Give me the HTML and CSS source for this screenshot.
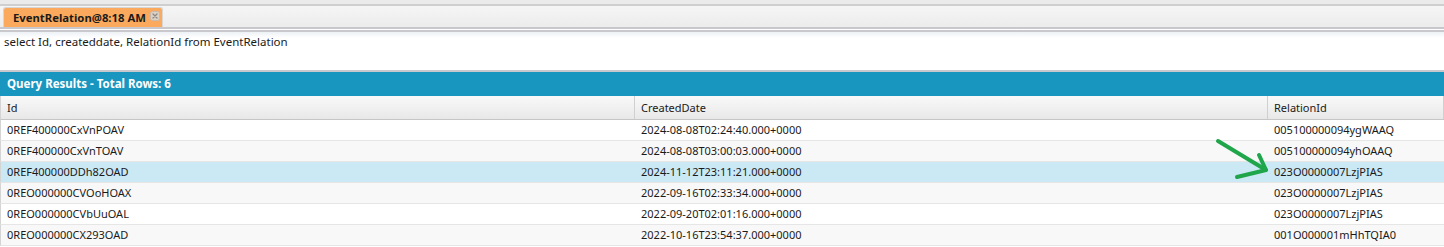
FILE: index.html
```html
<!DOCTYPE html>
<html lang="en">
<head>
  <meta charset="UTF-8">
  <title>EventRelation Query</title>
  <link rel="stylesheet" href="styles.css">
</head>
<body>

  <div class="tabbar">
    <div class="tab">
      <span class="tab-title">EventRelation@8:18 AM</span>
      <svg class="tab-close" width="10" height="10" viewBox="0 0 10 10">
        <rect x="0.5" y="0.5" width="9" height="9" rx="2" fill="#dcd1c5" stroke="#c7b9ab"/>
        <path d="M3 3 L7 7 M7 3 L3 7" stroke="#8f8780" stroke-width="1.3" stroke-linecap="round"/>
      </svg>
    </div>
  </div>

  <div class="editor">select Id, createddate, RelationId from EventRelation</div>

  <div class="results">
    <div class="results-title">Query Results - Total Rows: 6</div>
    <div class="grid-head">
      <div class="cell">Id</div>
      <div class="cell">CreatedDate</div>
      <div class="cell">RelationId</div>
    </div>
    <div class="row">
      <div class="cell">0REF400000CxVnPOAV</div><div class="cell">2024-08-08T02:24:40.000+0000</div><div class="cell">005100000094ygWAAQ</div>
    </div>
    <div class="row alt">
      <div class="cell">0REF400000CxVnTOAV</div><div class="cell">2024-08-08T03:00:03.000+0000</div><div class="cell">005100000094yhOAAQ</div>
    </div>
    <div class="row selected">
      <div class="cell">0REF400000DDh82OAD</div><div class="cell">2024-11-12T23:11:21.000+0000</div><div class="cell">023O0000007LzjPIAS</div>
    </div>
    <div class="row alt">
      <div class="cell">0REO000000CVOoHOAX</div><div class="cell">2022-09-16T02:33:34.000+0000</div><div class="cell">023O0000007LzjPIAS</div>
    </div>
    <div class="row">
      <div class="cell">0REO000000CVbUuOAL</div><div class="cell">2022-09-20T02:01:16.000+0000</div><div class="cell">023O0000007LzjPIAS</div>
    </div>
    <div class="row alt">
      <div class="cell">0REO000000CX293OAD</div><div class="cell">2022-10-16T23:54:37.000+0000</div><div class="cell">001O000001mHhTQIA0</div>
    </div>

    <!-- green annotation arrow drawn over the grid -->
    <svg class="arrow" width="66" height="50" viewBox="0 0 66 50">
      <path d="M8 6 L56 35" stroke="#1fa64a" stroke-width="4" stroke-linecap="round" fill="none"/>
      <path d="M49 20 L56 35 L27 42" stroke="#1fa64a" stroke-width="4" stroke-linecap="round" stroke-linejoin="round" fill="none"/>
    </svg>
  </div>

</body>
</html>
```

FILE: styles.css
```css
body {
  margin: 0;
  padding: 0;
  background: #ffffff;
  font-family: 'Noto Sans', 'Open Sans', sans-serif;
  font-size: 11px;
  color: #1a1a1a;
}

.tabbar {
  height: 21px;
  border-top: 4px solid #ebebeb;
  border-bottom: 2px solid #c8c8cc;
  box-shadow: inset 0 2px 0 #cfcfcf;
  background: linear-gradient(#f6f6f6, #ececec);
  padding: 2px 0 0 3px;
  display: flex;
  align-items: flex-end;
}

.tab {
  height: 20px;
  width: 160px;
  box-sizing: border-box;
  background: #fbaa5d;
  border: 1px solid #d6d6d6;
  border-bottom: none;
  border-radius: 3px 3px 0 0;
  display: flex;
  align-items: center;
  padding-left: 9px;
  position: relative;
}

.tab-title {
  font-weight: bold;
  font-size: 11.3px;
  white-space: nowrap;
  color: #1a1a1a;
}

.tab-close {
  position: absolute;
  right: 2px;
  top: 3px;
}

.editor {
  margin-top: 1px;
  height: 36px;
  border-top: 2px solid #c9c9cd;
  border-bottom: 2px solid #c9c9cd;
  background: linear-gradient(#eef1f5, #ffffff 6px);
  padding: 2px 4px 0;
  font-size: 11.5px;
  line-height: 16px;
}

.results {
  position: relative;
}

.results-title {
  height: 24px;
  background: #1996c0;
  color: #ffffff;
  font-weight: bold;
  font-size: 11.5px;
  line-height: 24px;
  padding-left: 7px;
}

.grid-head,
.row {
  display: grid;
  grid-template-columns: 634px 633px 1fr;
  border-left: 1px solid #d4d4d4;
}

.grid-head {
  height: 23px;
  background: linear-gradient(#f9f9f9, #e8e8e8);
  border-bottom: 1px solid #c6c6c6;
}

.grid-head .cell {
  line-height: 23px;
  border-right: 1px solid #d0d0d0;
  padding-left: 6px;
}

.row {
  height: 20px;
  border-bottom: 1px solid #e6e6e6;
}

.row .cell {
  line-height: 20px;
  padding-left: 6px;
  white-space: nowrap;
}

.row.alt {
  background: #f8f8f8;
}

.row.selected {
  background: #cbe8f5;
}

.arrow {
  position: absolute;
  left: 1210px;
  top: 63px;
}
```
